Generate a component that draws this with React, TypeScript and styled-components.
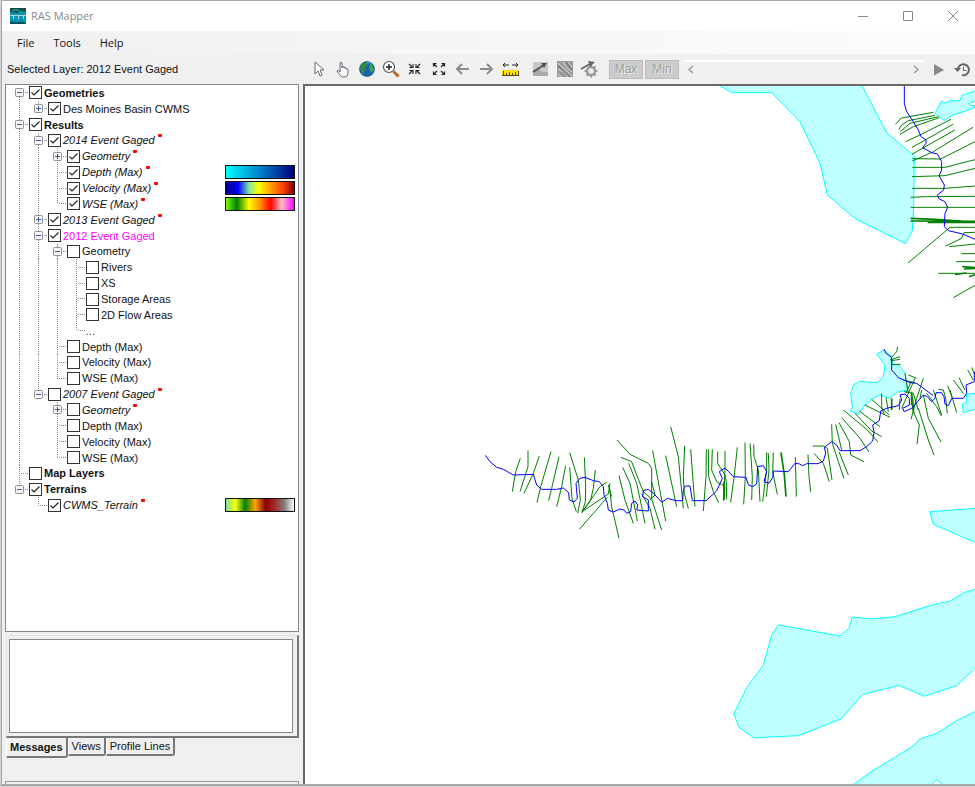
import React, { useState } from "react";
import styled, { createGlobalStyle } from "styled-components";

const GlobalStyle = createGlobalStyle`
  * { box-sizing: border-box; }
  html, body, #root { height: 100%; margin: 0; }
  body { background: #d2d2d2; font-family: "Liberation Sans", Arial, sans-serif; font-size: 11px; color: #111; }
  button { font: inherit; color: inherit; padding: 0; margin: 0; border: 0; background: none; }
`;

const tick =
  "url(\"data:image/svg+xml,%3Csvg xmlns='http://www.w3.org/2000/svg' viewBox='0 0 11 11'%3E%3Cpath d='M1.5 5.5L4 8L9.5 2.5' fill='none' stroke='%23222' stroke-width='1.2'/%3E%3C/svg%3E\")";

/* ---------- window frame ---------- */

const Window = styled.div`
  display: flex;
  flex-direction: column;
  height: calc(100vh - 1px);
  min-height: 640px;
  margin-left: 1px;
  border: 1px solid #a8a8a8;
  border-right: 0;
  border-bottom: 2px solid #a8a8a8;
  background: #f0f0f0;
  overflow: hidden;
`;

const TitleBar = styled.header`
  display: flex;
  align-items: center;
  flex: none;
  height: 30px;
  padding-left: 8px;
  background: #fff;
`;

const Title = styled.h1`
  flex: 1;
  margin: 0 0 0 5px;
  font: 400 11px/16px "Open Sans", "Noto Sans", sans-serif;
  color: #888;
`;

const CaptionButton = styled.button`
  display: grid;
  place-items: center;
  width: 45px;
  height: 30px;
  svg { display: block; }
`;

const MenuBar = styled.nav`
  display: flex;
  align-items: center;
  flex: none;
  gap: 3px;
  height: 23px;
  padding-left: 7px;
  background: linear-gradient(90deg, #f0f0f0, #fcfcfc);
`;

const MenuItem = styled.button`
  padding: 0 8px;
  font: 400 11px/20px "Open Sans", "Noto Sans", sans-serif;
`;

const ToolStrip = styled.div`
  display: grid;
  grid-template-columns: 305px minmax(0, 1fr);
  align-items: center;
  flex: none;
  height: 30px;
`;

const SelectedLayer = styled.div`
  padding-left: 5px;
  line-height: 16px;
`;

const Tools = styled.div`
  display: flex;
  align-items: center;
  min-width: 0;
`;

const ToolGroup = styled.div`
  display: flex;
  margin-right: 6px;
`;

const ToolButton = styled.button`
  display: grid;
  place-items: center;
  flex: none;
  width: 24px;
  height: 24px;
  svg { display: block; }
`;

const StepButton = styled.button`
  flex: none;
  width: 34px;
  height: 19px;
  margin-left: 2px;
  border: 1px solid #bdbdbd;
  background: #ccc;
  color: #a0a0a0;
  font-size: 12px;
  text-shadow: 1px 1px 0 #eee;
`;

const TimeScroll = styled.div`
  display: flex;
  justify-content: space-between;
  align-items: center;
  flex: 1;
  height: 19px;
  margin: 0 3px 0 4px;
  padding: 0 4px;
  border-top: 2px solid #fff;
`;

const ScrollArrow = styled.button`
  width: 8px;
  height: 16px;
  svg { display: block; }
`;

const Body = styled.main`
  display: grid;
  grid-template-columns: 301px minmax(0, 1fr);
  flex: 1;
  min-height: 0;
`;

/* ---------- layer tree ---------- */

const Sidebar = styled.aside`
  display: flex;
  flex-direction: column;
  min-height: 0;
  padding: 0 4px 0 3px;
`;

const TreePanel = styled.section`
  flex: 1;
  min-height: 0;
  overflow: hidden;
  border: 1px solid #828790;
  background: #fff;
`;

const TreeRows = styled.ul<{ $count: number }>`
  display: grid;
  grid-template-rows: repeat(${(p) => p.$count}, minmax(0, 1fr));
  height: 428px;
  margin: 0;
  padding: 0 3px 0 4px;
  list-style: none;
`;

const Row = styled.li`
  display: flex;
  align-items: center;
  min-height: 0;
`;

type Line = "none" | "full" | "top" | "bottom";

const dotsDown = "repeating-linear-gradient(180deg, #888 0 1px, #fff 1px 2px)";
const dotsAcross = "repeating-linear-gradient(90deg, #888 0 1px, #fff 1px 2px)";
const lineSize = { none: "0 0", full: "1px 100%", top: "1px 50%", bottom: "1px 50%" };

const Guide = styled.span<{ $line: Line; $arm?: boolean }>`
  display: grid;
  place-items: center;
  flex: none;
  align-self: stretch;
  width: 19px;
  background-image: ${dotsDown}, ${dotsAcross};
  background-repeat: no-repeat;
  background-size: ${(p) => lineSize[p.$line]}, ${(p) => (p.$arm ? "10px 1px" : "0 0")};
  background-position: 9px ${(p) => (p.$line === "bottom" ? "100%" : "0")}, 9px 50%;
`;

const Expander = styled.button`
  display: block;
  width: 9px;
  height: 9px;
  svg { display: block; }
`;

const LayerLabel = styled.label<{ $bold?: boolean; $italic?: boolean; $color?: string }>`
  display: flex;
  align-items: center;
  gap: 2px;
  line-height: 16px;
  white-space: nowrap;
  font-weight: ${(p) => (p.$bold ? 700 : 400)};
  font-style: ${(p) => (p.$italic ? "italic" : "normal")};
  color: ${(p) => p.$color ?? "#111"};
`;

const CheckBox = styled.input`
  appearance: none;
  flex: none;
  width: 13px;
  height: 13px;
  margin: 0;
  border: 1px solid #333;
  background: #fff;
  &:checked { background: #fff ${tick} center / 11px 11px no-repeat; }
`;

const RedMark = styled.i`
  align-self: flex-start;
  width: 4px;
  height: 3px;
  margin: 2px 0 0 1px;
  border-radius: 1px;
  background: #f00;
`;

const Ramp = styled.span<{ $stops: string }>`
  width: 70px;
  height: 14px;
  margin-left: auto;
  border: 1px solid #111;
  background: linear-gradient(90deg, ${(p) => p.$stops});
`;

/* ---------- message panel ---------- */

const MessagePanel = styled.section`
  flex: none;
  margin: 3px 0 0 1px;
`;

const MessageFrame = styled.div`
  padding: 3px 4px 3px 2px;
  border: 1px solid #e3e3e3;
  border-right: 2px solid #777;
  border-bottom: 2px solid #777;
`;

const MessageBox = styled.textarea`
  display: block;
  width: 100%;
  height: 94px;
  padding: 2px;
  border: 1px solid #828790;
  outline: 0;
  background: #fff;
  resize: none;
`;

const TabRow = styled.div`
  display: flex;
  align-items: flex-start;
  height: 43px;
`;

const Tab = styled.button<{ $active?: boolean }>`
  height: ${(p) => (p.$active ? 20 : 18)}px;
  padding: 0 3px;
  border-right: 2px solid #777;
  border-bottom: 2px solid #777;
  border-left: 1px solid #fff;
  border-radius: 0 0 3px 1px;
  font-weight: ${(p) => (p.$active ? 700 : 400)};
`;

const StatusEdge = styled.div`
  flex: none;
  height: 3px;
  border: 1px solid #999;
  border-bottom: 0;
`;

const MapPanel = styled.section`
  min-width: 0;
  min-height: 0;
  border-top: 2px solid #696969;
  border-left: 2px solid #696969;
  background: #fff;
  svg { display: block; width: 100%; height: 100%; }
`;

/* ---------- data ---------- */

interface Layer {
  name: string;
  checked?: boolean;
  bold?: boolean;
  edited?: boolean;
  color?: string;
  ramp?: string;
  open?: boolean;
  bare?: boolean;
  children?: Layer[];
}

const layers: Layer[] = [
  {
    name: "Geometries", bold: true, checked: true, open: true,
    children: [{ name: "Des Moines Basin CWMS", checked: true, open: false }],
  },
  {
    name: "Results", bold: true, checked: true, open: true,
    children: [
      {
        name: "2014 Event Gaged", edited: true, checked: true, open: true,
        children: [
          { name: "Geometry", edited: true, checked: true, open: false },
          { name: "Depth (Max)", edited: true, checked: true, ramp: "#0ff, #0080c8 50%, #000080" },
          { name: "Velocity (Max)", edited: true, checked: true, ramp: "#000080, #00f 18%, #80e8a0 34%, #ff0 48%, #ff9000 68%, #ff4000 84%, #800000" },
          { name: "WSE (Max)", edited: true, checked: true, ramp: "#7cfc00, #008000 16%, #ff0 34%, #ff9000 50%, #f00 66%, #ffc0cb 82%, #f0f" },
        ],
      },
      { name: "2013 Event Gaged", edited: true, checked: true, open: false },
      {
        name: "2012 Event Gaged", color: "#f0f", checked: true, open: true,
        children: [
          {
            name: "Geometry", open: true,
            children: [
              { name: "Rivers" },
              { name: "XS" },
              { name: "Storage Areas" },
              { name: "2D Flow Areas" },
              { name: "...", bare: true, color: "#800080" },
            ],
          },
          { name: "Depth (Max)" },
          { name: "Velocity (Max)" },
          { name: "WSE (Max)" },
        ],
      },
      {
        name: "2007 Event Gaged", edited: true, open: true,
        children: [
          { name: "Geometry", edited: true, open: false },
          { name: "Depth (Max)" },
          { name: "Velocity (Max)" },
          { name: "WSE (Max)" },
        ],
      },
    ],
  },
  { name: "Map Layers", bold: true },
  {
    name: "Terrains", bold: true, checked: true, open: true,
    children: [{ name: "CWMS_Terrain", edited: true, checked: true, ramp: "#7fe0a0, #ff0 14%, #008000 28%, #ffa500 43%, #8b0000 58%, #a52a2a 72%, #808080 86%, #fff" }],
  },
];

interface FlatRow { id: string; layer: Layer; guides: Line[] }

function flatten(list: Layer[], parents: Line[] = [], path = "layer"): FlatRow[] {
  return list.flatMap((layer, i) => {
    const last = i === list.length - 1;
    const own: Line = last ? "top" : i === 0 && parents.length === 0 ? "bottom" : "full";
    const id = `${path}-${i}`;
    const below = [...parents, (last ? "none" : "full") as Line];
    return [
      { id, layer, guides: [...parents, own] },
      ...(layer.open && layer.children ? flatten(layer.children, below, id) : []),
    ];
  });
}

function LayerRow({ id, layer, guides }: FlatRow) {
  const [on, setOn] = useState(Boolean(layer.checked));
  return (
    <Row>
      {guides.map((line, i) => {
        const own = i === guides.length - 1;
        return (
          <Guide key={i} $line={line} $arm={own}>
            {own && layer.open !== undefined && (
              <Expander aria-label={`${layer.open ? "Collapse" : "Expand"} ${layer.name}`}>
                <svg width="9" height="9" viewBox="0 0 9 9">
                  <rect x=".5" y=".5" width="8" height="8" rx="1" fill="#f5f5f5" stroke="#919191" />
                  <path d={layer.open ? "M2 4.5h5" : "M2 4.5h5M4.5 2v5"} stroke="#3c5aa0" />
                </svg>
              </Expander>
            )}
          </Guide>
        );
      })}
      <LayerLabel htmlFor={layer.bare ? undefined : id} $bold={layer.bold} $italic={layer.edited} $color={layer.color}>
        {!layer.bare && <CheckBox type="checkbox" id={id} checked={on} onChange={() => setOn(!on)} />}
        <span>{layer.name}</span>
        {layer.edited && <RedMark />}
      </LayerLabel>
      {layer.ramp && <Ramp $stops={layer.ramp} />}
    </Row>
  );
}

/* ---------- toolbar icons ---------- */

const Icon = ({ children, size = 18 }: { children: React.ReactNode; size?: number }) => (
  <svg width={size} height={size} viewBox="0 0 18 18" fill="none">{children}</svg>
);

const navTools = [
  { name: "Select", art: <path d="M5 2v12l3-3 2 5 2-1-2-5h4z" fill="#fff" stroke="#667" strokeLinejoin="round" /> },
  { name: "Pan", art: <path d="M6 11V3q1-2 2 0v5V7q1-1 2 0v1q1-1 2 0v1q2-1 2 1v3q0 4-3 4H8Q6 15 3 11q1-2 3 1z" fill="#fff" stroke="#667" strokeLinejoin="round" /> },
  {
    name: "Full extent",
    art: (
      <>
        <circle cx="9" cy="9" r="7.5" fill="#1763a8" stroke="#123f6b" strokeWidth=".6" />
        <path d="M3 5l4-3 3 1-1 3-2 1 1 2-2 2 0 4-3-3-1-4z" fill="#2f8a4a" />
        <path d="M12 4l3 2 1 4-2 3-2-2-1-3z" fill="#3aa05a" />
        <path d="M9 2.500q4-.5 5 2" stroke="#58b6e0" />
      </>
    ),
  },
  {
    name: "Zoom in",
    art: (
      <>
        <path d="M11.500 11.500l5 5" stroke="#c4631c" strokeWidth="3" />
        <circle cx="7" cy="7" r="5.500" fill="#fff" stroke="#555" strokeWidth="1.200" />
        <path d="M4 7h6M7 4v6" stroke="#222" strokeWidth="1.400" />
      </>
    ),
  },
  { name: "Zoom to layer", art: <path d="M3 4l3 3M7 4v3.500H3.500M14 4l-3 3M10 4v3.500h3.500M3 14l3-3M3.500 10.500H7V14M14 14l-3-3M10 14v-3.500h3.500" stroke="#222" strokeWidth="1.100" /> },
  { name: "Zoom out fixed", art: <path d="M7 7L4 4M3.500 6.500v-3h3M11 7l3-3M11.500 3.500h3v3M7 11l-3 3M3.500 11.500v3h3M11 11l3 3M14.500 11.500v3h-3" stroke="#222" strokeWidth="1.200" /> },
  { name: "Previous view", art: <path d="M15 9H4M8 4L3 9l5 5" stroke="#8c8c8c" strokeWidth="2" /> },
  { name: "Next view", art: <path d="M2 9h11M9 4l5 5-5 5" stroke="#8c8c8c" strokeWidth="2" /> },
  {
    name: "Measure",
    art: (
      <>
        <path d="M1 5h6M3 3L1 5l2 2M10 5h6M14 3l2 2-2 2" stroke="#222" />
        <path d="M0 10h17v6H0z" fill="#ffe000" />
        <path d="M0 15.500h17M1.500 11v4M4.500 13v2M7.500 12v3M10.500 13v2M13.500 12v3M16.500 11v4" stroke="#55480a" />
      </>
    ),
  },
];

const plotTools = [
  { name: "Static arrows", art: <><path d="M1 2h15v14H1z" fill="#c8c8c8" /><path d="M1 10l6-1 3 3h6v4H1z" fill="#aaa" /><path d="M1 12L12 5" stroke="#555" strokeWidth="2" /><path d="M9 3h6l-3 5z" fill="#555" /></> },
  { name: "Particle tracing", art: <><path d="M1 1h16v16H1z" fill="#999" /><path d="M2 3l14 13M7 2l4 6 5 4M2 9l6 3 4 5M12 2l4 5M2 14l4 3" stroke="#ddd" /><path d="M2 6l12 11M10 2l6 8" stroke="#666" /></> },
  { name: "Animation options", art: <><circle cx="11" cy="11" r="4" stroke="#999" strokeWidth="2.500" /><path d="M11 4.500v2M11 15.500v2M4.500 11h2M15.500 11h2M15.600 6.400l-1.400 1.400M7.800 14.200l-1.400 1.400M15.600 15.600l-1.400-1.400" stroke="#999" strokeWidth="2" /><path d="M1 9l9-5" stroke="#666" strokeWidth="2" /><path d="M8 1l7 1-5 5z" fill="#666" /></> },
];

/* ---------- map ---------- */

interface Sheet { at: [number, number]; lakes?: string[]; river?: string; sections?: string; dense?: string }

const sheets: Sheet[] = [
  {
    at: [700, 80],
    lakes: [
      "M55 15L95 38H215L300 125 360 250 382 345 467 417 617 491 637 452 641 380 643 228 560 158 485 15Z",
      "M705 100L725 63 735 70 750 61 778 63 787 45 825 33 850 33V62L825 63 807 70 810 77 850 78V80L825 82 800 92 755 106 733 122Z",
    ],
    river: "M613 18V70L620 95 640 125 655 150 663 170 678 180V190L668 203 695 218 712 222 725 245V270L717 287 733 315 731 330 712 345 718 357 735 365 743 382 735 400 733 440 745 452 788 462 825 478",
    sections:
      "M586 133L604 114 700 97M597 148L605 135 625 122 705 106M601 155L630 130 715 110M600 163L640 140 718 113M617 185L660 165 753 118M636 202L690 172 760 132M636 223L690 192 765 150M637 243L700 215 819 142M637 236L722 237 825 185M637 262H735L825 239M636 290L735 287 825 265M636 325H735L825 318M632 352L680 350 825 349M632 382H825M624 549L750 442H825M737 498L785 475 792 458 825 457M748 500L825 492M784 521H825M768 545H825M715 580H825M760 653L825 616",
    dense: "M632 415L705 418 825 426M632 423L825 424M683 427L825 427M787 560L825 563M792 567L825 565M765 583L800 579M807 590L825 584",
  },
  {
    at: [800, 330],
    lakes: [
      "M230 72L252 60 275 80 278 105 296 105 316 130 318 160 323 180 290 187 268 205 240 195 215 208 195 225 175 253 150 243 157 232 152 190 160 165 178 154 232 158 250 140 255 105 240 85Z",
      "M550 188L500 192 498 218 487 222 490 248 550 230Z",
    ],
    river: "M252 57L258 70 275 82 275 120 295 143 330 158 350 160 400 197M0 403L8 407 20 401H55L70 393 77 370 73 352 95 335 110 345 120 362H180L200 350 218 333 222 305 218 285 238 272 242 243 260 235 295 227 305 210 300 195 315 192 328 205V225L308 235 312 245 335 235 370 195 382 200 395 215 405 205 408 188H425L432 200 435 222 445 227 455 205H490L500 190 498 165 523 155V125",
    sections:
      "M24 373L27 440 32 485M38 348H70L82 355 96 450M42 370L70 400 88 455M95 283L97 340 115 395 132 445M107 283L125 360M117 365L145 435M117 278L148 335 152 375 192 395M125 263L180 325 207 366M130 240L200 298 234 336M165 250L215 303 245 320M178 243L240 290M195 225L270 262M215 208L268 255M245 190V230L253 255M258 203L265 245M300 207L298 240M355 235L385 330 402 375M370 195L385 265 423 336M370 145L350 205 333 268M380 190L410 230 424 258M400 180L425 255M415 178L430 180 437 205 442 250M443 167L458 207M460 150L490 190M477 143L495 180M450 180L470 248M503 120L520 150M515 112L525 135M315 130L325 190M325 135L350 145M345 145L305 235M293 50L290 65 275 82M270 90L300 80M275 92L300 88M275 103H302M333 155L318 190M310 150L345 158M365 180L360 205M335 185L338 240 358 285 351 343M340 190L355 240M338 200L342 250M312 185L340 190",
    dense: "M275 205V240M335 188V225",
  },
  {
    at: [470, 420],
    river: "M46 106L60 125 80 142 100 148 130 165 190 163 200 195 215 208H260L280 204 296 218 298 240 312 246 322 235 318 190 330 175 345 172 370 182 388 185 400 200 402 225 412 250 415 270 430 276 450 267 462 270 470 280 482 275 485 250 495 243 503 255 500 270 535 273V240L518 230 520 212 535 208 550 220 575 246",
    sections:
      "M151 115L137 155 127 215M174 92V140L150 215M208 108L190 160 162 220M243 95L212 200 201 248M267 110L245 205 236 242M287 137L275 200 260 260M299 98L325 180 331 240 323 280M299 142L306 235 319 275M343 112L347 195 346 245 336 278M376 150L370 205 362 240 336 275M410 187L390 200 336 278M420 190L415 222 336 275M412 232L328 328M418 195L425 260 447 355M415 195L425 230M441 60L480 103 535 130 545 145V235M452 112L485 125 500 165 520 215 545 237 575 330M458 142L480 190 502 303M447 167L465 240 490 310M476 130L500 190 515 260 525 310M515 222L540 265 555 328M545 185L555 225 540 240",
  },
  {
    at: [650, 410],
    river: "M35 277L52 265 78 272H98L100 240 106 228H120L127 272H168L200 243 217 205 208 185 225 174 250 200 288 202 295 225 308 230 320 222 323 170 340 167 350 185 342 215 357 220 368 203 370 183 415 185 435 160 450 162",
    sections:
      "M8 122L22 200 47 333M47 137L80 290M62 50L85 140 100 295M104 107L100 200 103 250 115 295M122 118L135 290M169 118L168 200 160 303M175 118L176 200 190 245 206 278M187 118L185 180 200 215 225 230 221 270M203 125V160L225 195 230 225 229 268M225 123V180L220 272M262 112L253 195 242 277M285 98L286 200 281 283M300 100L307 200 305 270M311 103L312 140 325 180 330 275M350 127V180L338 275M355 130L357 180 349 260M370 128L368 185 382 253M436 142L439 260",
    dense: "M393 127L403 195 408 260M222 215V270",
  },
  {
    at: [720, 490],
    lakes: [
      "M629 65L800 53V172L765 157 640 103Z",
      "M175 405L360 438 387 415 397 381 455 387 525 380 625 348 690 333 735 307 765 298 800 292V502L765 535 710 587 613 619 537 586 427 614 363 687 235 737 130 742 103 744 58 713 41 672 80 593 130 525 155 435Z",
      "M390 890L402 882 450 847 580 768 600 747 650 730 710 692 765 665 800 650V900H685L650 869 630 890Z",
    ],
  },
];

const MapView = () => (
  <svg viewBox="305 86 670 698" preserveAspectRatio="xMinYMin slice" role="img" aria-label="River reaches, cross sections and storage areas" fill="none">
    {sheets.map(({ at, lakes, sections, dense, river }, i) => (
      <g key={i} transform={`translate(${at[0]} ${at[1]}) scale(${1 / 3})`} strokeWidth="3">
        {lakes?.map((d) => <path key={d} d={d} fill="#c0ffff" stroke="#00ffff" />)}
        <path d={sections} stroke="#008000" />
        <path d={dense} stroke="#008000" strokeWidth="5" />
        <path d={river} stroke="#0000ff" strokeLinejoin="round" />
      </g>
    ))}
  </svg>
);

export default function App() {
  const rows = flatten(layers);
  return (
    <>
      <GlobalStyle />
      <Window>
        <TitleBar>
          <svg width="16" height="16" viewBox="0 0 16 16">
            <path d="M0 0h16v16H0z" fill="#0b96b5" />
            <path d="M0 0h16v4l-5-1-4 2-7-1z" fill="#14533a" />
            <path d="M2 3q4-3 8 0" stroke="#19b5d5" fill="none" />
            <path d="M0 7.500h16M3.500 7v4M8.500 7v4M13.500 7v4" stroke="#b8d5d8" />
            <path d="M0 13q4 2 8 1t8 1v1H0z" fill="#0a5163" />
          </svg>
          <Title>RAS Mapper</Title>
          <CaptionButton aria-label="Minimize"><svg width="10" height="10"><path d="M0 5.500h10" stroke="#888" /></svg></CaptionButton>
          <CaptionButton aria-label="Maximize"><svg width="10" height="10"><path d="M.5.5h9v9h-9z" fill="none" stroke="#888" /></svg></CaptionButton>
          <CaptionButton aria-label="Close"><svg width="10" height="10"><path d="M0 0l10 10M10 0L0 10" stroke="#888" /></svg></CaptionButton>
        </TitleBar>
        <MenuBar>
          <MenuItem>File</MenuItem>
          <MenuItem>Tools</MenuItem>
          <MenuItem>Help</MenuItem>
        </MenuBar>
        <ToolStrip>
          <SelectedLayer>Selected Layer: 2012 Event Gaged</SelectedLayer>
          <Tools>
            <ToolGroup>
              {navTools.map((t) => <ToolButton key={t.name} aria-label={t.name}><Icon>{t.art}</Icon></ToolButton>)}
            </ToolGroup>
            <ToolGroup>
              {plotTools.map((t) => <ToolButton key={t.name} aria-label={t.name}><Icon>{t.art}</Icon></ToolButton>)}
            </ToolGroup>
            <StepButton>Max</StepButton>
            <StepButton>Min</StepButton>
            <TimeScroll>
              <ScrollArrow aria-label="Earlier"><svg width="8" height="16"><path d="M6 4L2 7.500 6 11" fill="none" stroke="#999" strokeWidth="1.400" /></svg></ScrollArrow>
              <ScrollArrow aria-label="Later"><svg width="8" height="16"><path d="M2 4l4 3.500L2 11" fill="none" stroke="#999" strokeWidth="1.400" /></svg></ScrollArrow>
            </TimeScroll>
            <ToolButton aria-label="Play"><Icon><path d="M4 4l10 6-10 5.500z" fill="#888" /></Icon></ToolButton>
            <ToolButton aria-label="Time options">
              <Icon>
                <path d="M4 10a5.500 5.500 0 1 1 4 5" stroke="#666" strokeWidth="2" />
                <path d="M0 8h7l-3.500 4z" fill="#666" />
                <path d="M9.500 6.500v4h3" stroke="#666" />
              </Icon>
            </ToolButton>
          </Tools>
        </ToolStrip>
        <Body>
          <Sidebar>
            <TreePanel aria-label="Layers">
              <TreeRows $count={rows.length}>
                {rows.map((r) => <LayerRow key={r.id} {...r} />)}
              </TreeRows>
            </TreePanel>
            <MessagePanel>
              <MessageFrame>
                <MessageBox aria-label="Messages" readOnly />
              </MessageFrame>
              <TabRow role="tablist">
                <Tab role="tab" aria-selected="true" $active>Messages</Tab>
                <Tab role="tab" aria-selected="false">Views</Tab>
                <Tab role="tab" aria-selected="false">Profile Lines</Tab>
              </TabRow>
            </MessagePanel>
            <StatusEdge />
          </Sidebar>
          <MapPanel>
            <MapView />
          </MapPanel>
        </Body>
      </Window>
    </>
  );
}
